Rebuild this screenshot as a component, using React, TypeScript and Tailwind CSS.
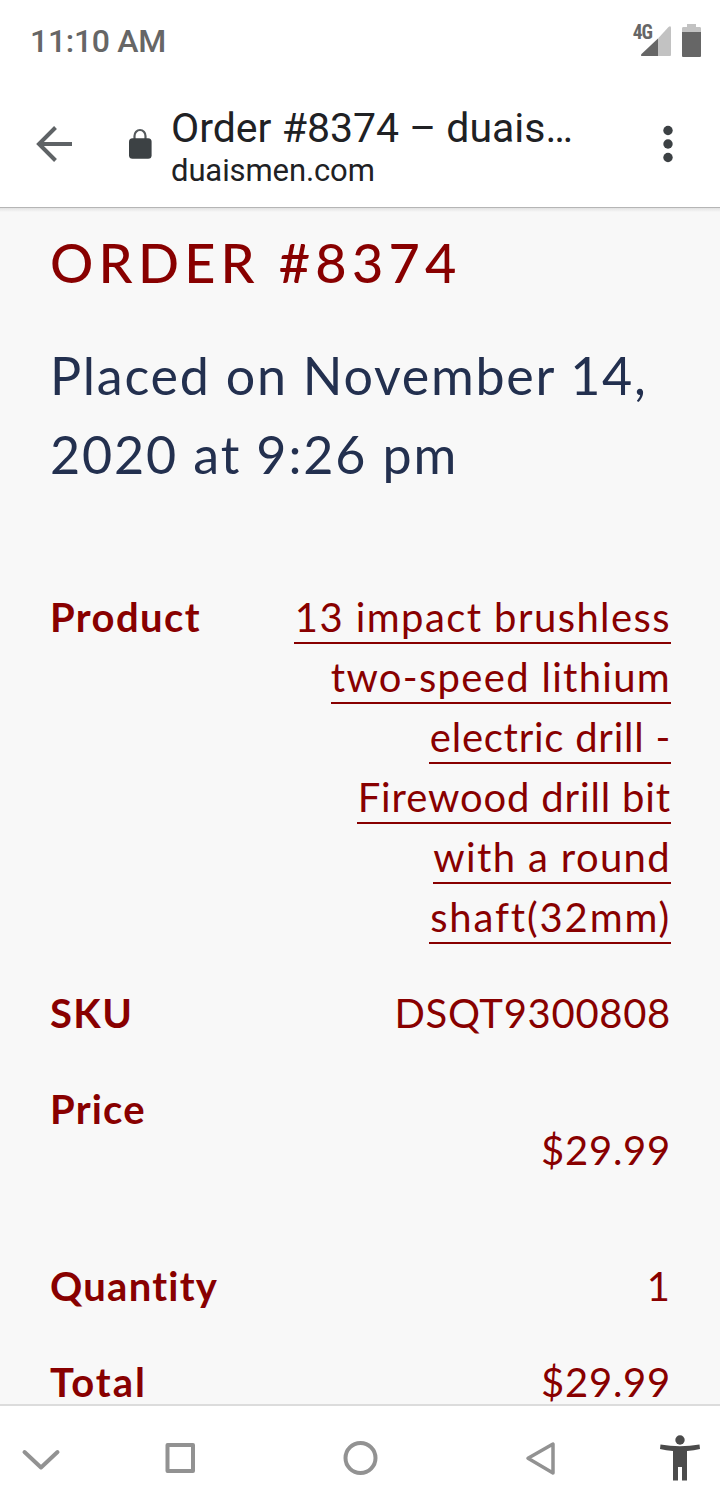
import type { ReactNode } from "react";

function StatusBar() {
  return (
    <div className="flex h-20 shrink-0 items-start justify-between font-[Roboto,sans-serif] text-[#666]">
      <div className="pt-[22px] pl-[30px] text-[32px] leading-[38px] font-medium tracking-[-0.3px] whitespace-nowrap">11:10 AM</div>
      <div className="flex pt-[21px] pr-[18px]">
        <span className="-mr-[12px] h-6 pt-[1px] font-['Roboto_Condensed',Roboto,sans-serif] text-[19.5px] leading-[22px] font-bold tracking-[-1px]">4G</span>
        <svg width="32" height="36" viewBox="0 0 32 36">
          <path d="M18 17.5V35H2.5Q0 35 1.5 33Z" fill="#666" />
          <path d="M18 17.5L28.5 6Q31 4 31 7V34Q31 35 30 35H18Z" fill="#c2c2c2" />
        </svg>
        <svg className="ml-[9px]" width="21" height="37" viewBox="0 0 21 37">
          <path d="M1 11V7.5Q1 6 2 6H6V3H15V6H19Q20 6 20 7.5V11Z" fill="#c2c2c2" />
          <path d="M1 11H20V35Q20 36 19 36H2Q1 36 1 35Z" fill="#666" />
        </svg>
      </div>
    </div>
  );
}

function BrowserBar() {
  return (
    <header className="flex h-[128px] shrink-0 border-b border-[#b5b5b5] font-[Roboto,sans-serif] text-[#202124]">
      <svg className="mt-[44px] ml-[34px] shrink-0" width="40" height="40" viewBox="0 0 40 40" fill="none" stroke="#5f6366" strokeWidth="4">
        <path d="M38 20H5M21.5 3.5L5 20L21.5 36.5" />
      </svg>
      <svg className="mt-[48px] ml-[54px] shrink-0" width="24" height="32" viewBox="0 0 24 32">
        <path d="M6.5 12V8a5.5 6 0 0 1 11 0V12" fill="none" stroke="#555a5d" strokeWidth="2.2" />
        <rect x="1" y="10.3" width="22.6" height="20.4" rx="3.5" fill="#3c4144" />
      </svg>
      <div className="ml-[19px] flex w-[440px] flex-col pt-[24px] whitespace-nowrap">
        <h1 className="text-[41px] leading-[48px]">Order #8374 – duais…</h1>
        <p className="pt-[1px] text-[31px] leading-[36px] tracking-[-0.1px]">duaismen.com</p>
      </div>
      <svg className="mt-[44px] ml-[45px] shrink-0" width="20" height="40" viewBox="0 0 20 40" fill="#3c4144">
        <circle cx="12" cy="6.5" r="4.7" />
        <circle cx="12" cy="20" r="4.7" />
        <circle cx="12" cy="33.5" r="4.7" />
      </svg>
    </header>
  );
}

function Row({ label, tracking, className, children }: { label: string; tracking: string; className: string; children: ReactNode }) {
  return (
    <div className={`flex shrink-0 justify-between pr-[49px] pl-[50px] text-[40px] ${className}`}>
      <dt className={`pt-[9px] leading-[48px] font-bold ${tracking}`}>{label}</dt>
      <dd className="text-right leading-[48px]">{children}</dd>
    </div>
  );
}

const productLines = [
  { text: "13 impact brushless", style: "w-[377px] tracking-[1.42px]" },
  { text: "two-speed lithium", style: "w-[340px] tracking-[1.3px]" },
  { text: "electric drill -", style: "w-[242px] tracking-[0.75px]" },
  { text: "Firewood drill bit", style: "w-[314px] tracking-[0.85px]" },
  { text: "with a round", style: "w-[238px] tracking-[1.35px]" },
  { text: "shaft(32mm)", style: "w-[242px] tracking-[1.85px]" },
];

function OrderPage() {
  return (
    <main className="flex h-[1196px] shrink-0 flex-col overflow-hidden bg-[#f8f8f8] bg-[linear-gradient(#e2e2e2,#f8f8f8_4px)] font-[Lato,sans-serif] whitespace-nowrap text-[#880000]">
      <h2 className="mt-[15px] h-[80px] pl-[50px] text-[54px] leading-[80px] font-medium tracking-[5.25px]">ORDER #8374</h2>
      <div className="mt-[33px] pl-[50px] text-[52px] leading-[79px] text-[#23304f]">
        <div className="tracking-[1.75px]">Placed on November 14,</div>
        <div className="tracking-[1.87px]">2020 at 9:26 pm</div>
      </div>
      <dl className="mt-[90px] flex flex-col">
        <Row label="Product" tracking="tracking-[1.4px]" className="h-[360px]">
          <a className="flex flex-col items-end">
            {productLines.map((line) => (
              <span key={line.text} className={`flex h-[60px] justify-end border-b-2 border-[#880000] pt-[4px] leading-[58px] ${line.style}`}>
                {line.text}
              </span>
            ))}
          </a>
        </Row>
        <Row label="SKU" tracking="tracking-[1.4px]" className="mt-[36px] h-[60px]"><span className="block pt-[9px] tracking-[0.7px]">DSQT9300808</span></Row>
        <Row label="Price" tracking="tracking-[1.2px]" className="mt-[36px] h-[100px]"><span className="block pt-[50px] tracking-[0.75px]">$29.99</span></Row>
        <Row label="Quantity" tracking="tracking-[1.25px]" className="mt-[77px] h-[60px]"><span className="block pt-[9px] pr-[1px]">1</span></Row>
        <Row label="Total" tracking="tracking-[2px]" className="mt-[36px] h-[60px]"><span className="block pt-[9px] tracking-[0.75px]">$29.99</span></Row>
      </dl>
    </main>
  );
}

function NavigationBar() {
  return (
    <nav className="flex h-[108px] shrink-0 border-t-2 border-[#dcdcdc] bg-white">
      <svg width="720" height="106" viewBox="0 1406 720 106" fill="none" stroke="#929292" strokeWidth="4" strokeLinejoin="round" strokeLinecap="round">
        <path d="M24.5 1452L41 1467.5L57.5 1452" />
        <path d="M167.5 1445H193V1471H167.5Z" />
        <circle cx="360.5" cy="1458" r="15" />
        <path d="M553 1444V1473L528 1458.3Z" strokeWidth="3.5" />
        <g fill="#4b4b4b" stroke="none">
          <circle cx="680" cy="1440" r="4.7" />
          <path d="M660.5 1444.5Q680 1448 699.5 1444.5L700 1449Q694 1450.5 687 1451V1480.5H682V1467H678V1480.5H673V1451Q666 1450.5 660 1449Z" />
        </g>
      </svg>
    </nav>
  );
}

export default function App() {
  return (
    <div className="flex h-[1512px] w-[720px] flex-col overflow-hidden bg-white">
      <StatusBar />
      <BrowserBar />
      <OrderPage />
      <NavigationBar />
    </div>
  );
}
